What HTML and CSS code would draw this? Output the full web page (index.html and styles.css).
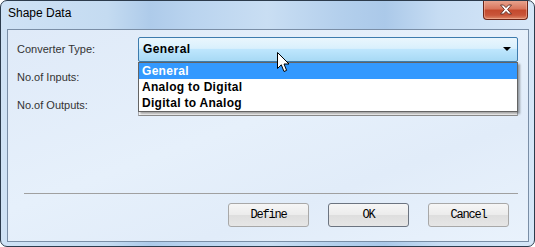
FILE: index.html
```html
<!DOCTYPE html>
<html lang="en">

<head>
    <meta charset="UTF-8" />
    <meta name="viewport" content="width=device-width, initial-scale=1.0" />
    <title>Shape Data</title>
    <link rel="stylesheet" href="styles.css">
</head>

<body>

    <div class="window">
        <div class="titlebar">
            <span class="title">Shape Data</span>
            <div class="close-btn">
                <svg width="14" height="11" viewBox="0 0 14 11">
                    <path d="M1.5 1 L4.5 1 L7 3.6 L9.5 1 L12.5 1 L8.6 5.5 L12.5 10 L9.5 10 L7 7.4 L4.5 10 L1.5 10 L5.4 5.5 Z"
                        fill="#fff" stroke="#5a2a22" stroke-width="0.9" stroke-linejoin="round" />
                </svg>
            </div>
        </div>

        <div class="client">
            <div class="fields">
                <div class="label">Converter Type:</div>
                <div class="combo-wrap">
                    <div class="combo">
                        <span>General</span>
                        <span class="arrow"></span>
                    </div>
                    <ul class="dropdown">
                        <li class="selected">General</li>
                        <li>Analog to Digital</li>
                        <li>Digital to Analog</li>
                    </ul>
                    <svg class="cursor" width="13" height="21" viewBox="0 0 13 21">
                        <path d="M0.5 0.5 L0.5 16.5 L4.3 12.8 L7 19.5 L9.6 18.4 L7 12 L12 12 Z" fill="#fff"
                            stroke="#000" stroke-width="1" stroke-linejoin="miter" />
                    </svg>
                </div>

                <div class="label">No.of Inputs:</div>
                <div class="field"><input type="text" class="text-input"></div>

                <div class="label">No.of Outputs:</div>
                <div class="field"><input type="text" class="text-input"></div>
            </div>

            <div class="separator"></div>

            <div class="buttons">
                <button class="btn">Define</button>
                <button class="btn default-btn">OK</button>
                <button class="btn">Cancel</button>
            </div>
        </div>
    </div>

</body>

</html>
```

FILE: styles.css
```css
body {
    margin: 0;
    font-family: "Liberation Sans", Arial, sans-serif;
    background: #fff;
}

.window {
    width: 535px;
    height: 247px;
    box-sizing: border-box;
    border: 1px solid #2c3b4c;
    border-radius: 7px;
    display: flex;
    flex-direction: column;
    overflow: hidden;
    background: linear-gradient(to right,
            #cfe2f5 0%,
            #c4dbf1 20%,
            #aecbea 28%,
            #bad4ef 36%,
            #c9def3 50%,
            #b3cfec 64%,
            #abc9e9 72%,
            #c6dcf3 82%,
            #d6e7f8 100%);
}

.titlebar {
    height: 28px;
    flex-shrink: 0;
    display: flex;
    justify-content: space-between;
    align-items: flex-start;
    padding: 0 6px 0 7px;
}

.title {
    font-size: 12px;
    line-height: 15px;
    padding-top: 5px;
    color: #000;
}

.close-btn {
    width: 43px;
    height: 19px;
    margin-top: -1px;
    border: 1px solid #6b2518;
    border-top: none;
    border-radius: 0 0 4px 4px;
    background: linear-gradient(to bottom, #e9a893 0%, #d9775e 45%, #c44a2e 55%, #c9553a 80%, #de8a6a 100%);
    box-shadow: inset 0 0 0 1px rgba(255, 200, 180, 0.45);
    display: flex;
    align-items: center;
    justify-content: center;
}

.client {
    flex: 1;
    margin: 0 5px 4px 6px;
    border: 1px solid #7a8ea6;
    background: linear-gradient(160deg, #dfeaf8 0%, #e6f0fb 45%, #e1ecf9 70%, #e9f2fc 100%);
    display: flex;
    flex-direction: column;
}

.fields {
    display: grid;
    grid-template-columns: 121px 380px;
    grid-auto-rows: 28px;
    align-items: center;
    padding: 5px 0 0 9px;
    height: 84px;
}

.label {
    font-size: 11px;
    color: #333;
    padding-bottom: 1px;
}

.combo-wrap {
    position: relative;
    height: 25px;
}

.combo {
    height: 25px;
    box-sizing: border-box;
    border: 1px solid #3d7bad;
    border-radius: 2px;
    background: linear-gradient(to bottom, #eaf6fd 0%, #d9f0fc 45%, #bee6fd 50%, #a7d9f5 100%);
    display: flex;
    align-items: center;
    justify-content: space-between;
    padding: 0 6px 0 4px;
    font-size: 12px;
    font-weight: bold;
    letter-spacing: 0.4px;
    color: #000;
}

.arrow {
    width: 0;
    height: 0;
    border-left: 4px solid transparent;
    border-right: 4px solid transparent;
    border-top: 4px solid #000;
}

.dropdown {
    position: absolute;
    top: 25px;
    left: 0;
    width: 380px;
    box-sizing: border-box;
    margin: 0;
    padding: 0;
    list-style: none;
    background: #fff;
    border: 1px solid #646464;
    box-shadow: 2px 2px 2px rgba(0, 0, 0, 0.35);
    z-index: 2;
}

.dropdown li {
    height: 16px;
    line-height: 16px;
    padding-left: 3px;
    font-size: 12px;
    font-weight: bold;
    letter-spacing: 0.3px;
    color: #000;
}

.dropdown li.selected {
    background: #3399ff;
    color: #fff;
}

.cursor {
    position: absolute;
    left: 139px;
    top: 15px;
    z-index: 3;
}

.field {
    display: flex;
}

.text-input {
    width: 380px;
    height: 22px;
    box-sizing: border-box;
    border: 1px solid #abadb3;
    border-bottom-color: #8c8c8c;
    background: #fff;
}

.separator {
    height: 1px;
    background: #a0a0a0;
    margin: 74px 10px 0 16px;
}

.buttons {
    display: flex;
    justify-content: flex-end;
    gap: 19px;
    padding: 9px 19px 0 0;
}

.btn {
    width: 81px;
    height: 24px;
    box-sizing: border-box;
    border: 1px solid #a8a8a8;
    border-radius: 3px;
    background: linear-gradient(to bottom, #f6f6f6 0%, #ececec 48%, #dedede 52%, #e6e6e6 100%);
    font-family: "Liberation Mono", "Courier New", monospace;
    font-size: 12px;
    letter-spacing: -1.2px;
    color: #000;
    padding: 0;
}

.default-btn {
    border-color: #6c7480;
}
```
